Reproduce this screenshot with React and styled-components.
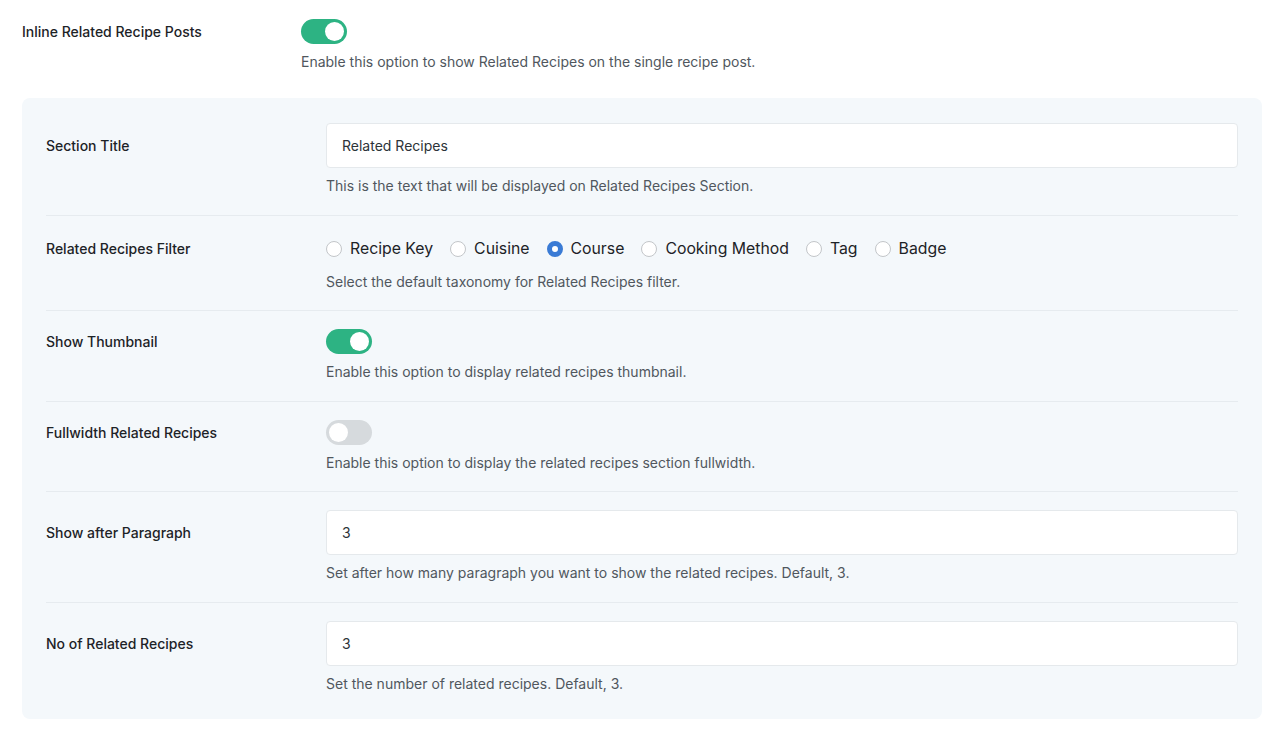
import React from "react";
import styled, { createGlobalStyle } from "styled-components";

const Global = createGlobalStyle`
  body {
    margin: 0;
    background: #ffffff;
    font-family: Inter, "Open Sans", "Liberation Sans", sans-serif;
    -webkit-font-smoothing: antialiased;
  }
`;

function Toggle({ on }) {
  return (
    <Track $on={on}>
      <Knob $on={on} />
    </Track>
  );
}

function RadioGroup({ options, value }) {
  return (
    <Radios>
      {options.map((o) => (
        <RadioItem key={o}>
          <RadioDot $checked={o === value} />
          {o}
        </RadioItem>
      ))}
    </Radios>
  );
}

function Field({ label, control, desc, $inPanel }) {
  return (
    <Row $inPanel={$inPanel}>
      <Label>{label}</Label>
      <Control>{control}</Control>
      <Desc>{desc}</Desc>
    </Row>
  );
}

export default function App() {
  return (
    <Page>
      <Global />
      <Field
        label="Inline Related Recipe Posts"
        control={<Toggle on />}
        desc="Enable this option to show Related Recipes on the single recipe post."
      />
      <Panel>
        <Field
          $inPanel
          label="Section Title"
          control={<TextInput readOnly value="Related Recipes" />}
          desc="This is the text that will be displayed on Related Recipes Section."
        />
        <Field
          $inPanel
          label="Related Recipes Filter"
          control={
            <RadioGroup
              options={["Recipe Key", "Cuisine", "Course", "Cooking Method", "Tag", "Badge"]}
              value="Course"
            />
          }
          desc="Select the default taxonomy for Related Recipes filter."
        />
        <Field
          $inPanel
          label="Show Thumbnail"
          control={<Toggle on />}
          desc="Enable this option to display related recipes thumbnail."
        />
        <Field
          $inPanel
          label="Fullwidth Related Recipes"
          control={<Toggle />}
          desc="Enable this option to display the related recipes section fullwidth."
        />
        <Field
          $inPanel
          label="Show after Paragraph"
          control={<TextInput readOnly value="3" />}
          desc="Set after how many paragraph you want to show the related recipes. Default, 3."
        />
        <Field
          $inPanel
          label="No of Related Recipes"
          control={<TextInput readOnly value="3" />}
          desc="Set the number of related recipes. Default, 3."
        />
      </Panel>
    </Page>
  );
}

// Styling
const Page = styled.div`
  padding: 19px 18px 16px 22px;
`;

const Row = styled.div`
  display: grid;
  grid-template-columns: ${(p) => (p.$inPanel ? "280px" : "279px")} 1fr;
  grid-template-areas:
    "label control"
    ". desc";
  align-items: center;
  padding: ${(p) => (p.$inPanel ? "18px 0 18.5px" : "0 0 26px")};
  border-bottom: ${(p) => (p.$inPanel ? "1px solid #e6ebef" : "none")};

  &:last-child {
    border-bottom: none;
  }
`;

const Label = styled.div`
  grid-area: label;
  font-size: 14px;
  font-weight: 550;
  color: #1d2327;
`;

const Control = styled.div`
  grid-area: control;
  display: flex;
  align-items: center;
`;

const Desc = styled.div`
  grid-area: desc;
  margin-top: 8px;
  font-size: 14px;
  line-height: 20px;
  color: #50575e;
`;

const Panel = styled.div`
  background: #f4f8fb;
  border-radius: 8px;
  padding: 7px 24px 7px 24px;
`;

const Track = styled.div`
  width: 46px;
  height: 25px;
  border-radius: 13px;
  background: ${(p) => (p.$on ? "#2db383" : "#d6dadd")};
  position: relative;
`;

const Knob = styled.div`
  position: absolute;
  top: 3px;
  left: ${(p) => (p.$on ? "24px" : "3px")};
  width: 19px;
  height: 19px;
  border-radius: 50%;
  background: #ffffff;
`;

const TextInput = styled.input`
  width: 100%;
  height: 45px;
  box-sizing: border-box;
  border: 1px solid #e5e9ec;
  border-radius: 4px;
  background: #ffffff;
  padding: 0 15px;
  font-family: inherit;
  font-size: 14px;
  color: #2c3338;
  outline: none;
`;

const Radios = styled.div`
  display: flex;
  align-items: center;
  gap: 17px;
  height: 30px;
`;

const RadioItem = styled.label`
  display: flex;
  align-items: center;
  gap: 8px;
  font-size: 15.8px;
  color: #1d2327;
`;

const RadioDot = styled.span`
  width: 16px;
  height: 16px;
  box-sizing: border-box;
  border-radius: 50%;
  background: #ffffff;
  border: ${(p) => (p.$checked ? "5px solid #3a7bd5" : "1.5px solid #c3c6c9")};
`;
